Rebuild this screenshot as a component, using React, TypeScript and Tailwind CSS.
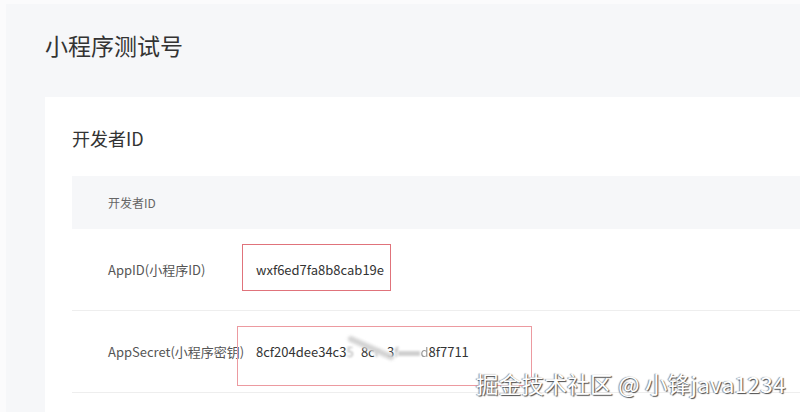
const font = { fontFamily: '"Noto Sans CJK SC", "Noto Sans", sans-serif' };

function Row({ label, children, box }: { label: string; children: React.ReactNode; box: string }) {
  return (
    <div className="relative flex h-[82px] items-center border-b border-[#eeeeee] pl-[36px]">
      <div className="w-[148px] shrink-0 text-[13px] text-[#555555]">{label}</div>
      <div className="text-[13px] text-[#333333]">{children}</div>
      <div className={`absolute border border-[#e0737b] ${box}`} />
    </div>
  );
}

export default function App() {
  return (
    <div className="h-[412px] w-[800px] overflow-hidden bg-[#fbfbfc] pl-[6px] pt-[4px]" style={font}>
      <div className="relative h-full bg-[#f6f7f9] pl-[39px]">
        <h1 className="pt-[26px] text-[23px] leading-[30px] text-[#333333]">小程序测试号</h1>
        <div className="mt-[37px] h-full bg-white pl-[27px] pt-[28px]">
          <h2 className="text-[18px] leading-[26px] text-[#333333]">开发者ID</h2>
          <div className="mt-[25px] flex h-[53px] items-center bg-[#f6f7f9] pl-[36px] text-[12px] text-[#666666]">
            开发者ID
          </div>
          <Row label="AppID(小程序ID)" box="left-[170px] top-[15px] h-[47px] w-[149px]">
            wxf6ed7fa8b8cab19e
          </Row>
          <Row label="AppSecret(小程序密钥)" box="left-[165px] top-[15px] h-[60px] w-[295px] border-[#ec9aa0]">
            <span className="relative">
              8cf204dee34c3<span className="opacity-40 blur-[1px]">5</span>
              <span className="opacity-0">e</span>8c<span className="opacity-40 blur-[1px]">r</span>
              <span className="opacity-0">1</span>3<span className="opacity-40 blur-[1px]">f</span>
              <span className="inline-block h-[5px] w-[22px] bg-[#cfcfcf] align-middle blur-[1px]" />
              <span className="opacity-50">d</span>8f7711
              <span className="absolute left-[90px] top-[3px] h-[6px] w-[50px] rotate-[24deg] rounded-full bg-[#d4d4d4] blur-[1.5px]" />
            </span>
          </Row>
        </div>
        <div className="absolute left-[470px] top-[363px] whitespace-nowrap text-[22.5px] tracking-[0.3px] text-white [text-shadow:1px_1px_1px_#4a4a4a,-1px_0_1px_#8a8a8a]">
          掘金技术社区 @ 小锋java1234
        </div>
      </div>
    </div>
  );
}
